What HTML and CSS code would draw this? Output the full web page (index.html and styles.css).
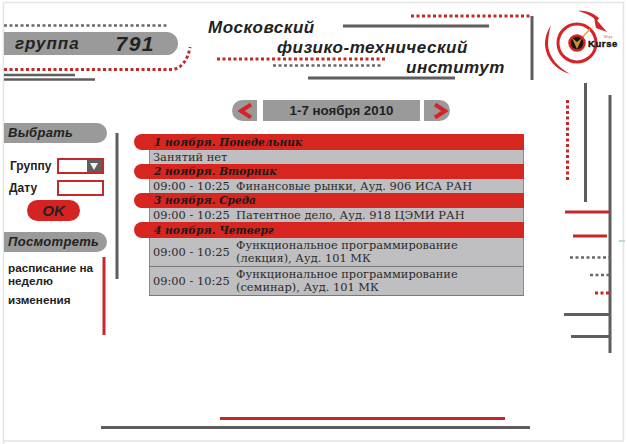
FILE: index.html
```html
<!DOCTYPE html>
<html lang="ru">
  <head>
    <meta charset="UTF-8" />
    <title>Расписание</title>
    <link rel="stylesheet" href="styles.css">
  </head>
  <body>
    <!-- decorative rules of the mockup, coordinates are the page's own -->
    <svg class="decor" width="627" height="444" viewBox="0 0 627 444">
      <path class="frame" d="M3.5 444V2.5H623.5V441H3.5" />

      <path class="dots-gray" d="M4 25.5H167" />
      <path class="dots-red" d="M4 69.5H172C181 69 188 60 190 47" />
      <path class="rule-gray thin" d="M4 75H75" />
      <path class="rule-gray thin" d="M4 79.5H95" />

      <path class="dots-red" d="M411 16H532" />
      <path class="rule-gray" d="M343 26H489" />
      <path class="rule-gray" d="M532 16V80" />
      <path class="dots-red" d="M217 59H385" />
      <path class="dots-gray" d="M273 65.5H383" />
      <path class="rule-gray" d="M308 78H455" />

      <path class="rule-gray" d="M117 133V279" />
      <path class="rule-red" d="M104 257V335" />

      <path class="rule-gray" d="M585.5 83V202" />
      <path class="rule-gray" d="M610 95V353" />
      <path class="dots-red" d="M567.5 100V181" />
      <path class="rule-red" d="M565 212H610" />
      <path class="rule-red" d="M573 236H607" />
      <path class="dots-gray" d="M570 257.5H610" />
      <path class="dots-gray" d="M590 275H610" />
      <path class="dots-red" d="M595 293H610" />
      <path class="rule-gray" d="M564 314.5H610" />
      <path class="rule-gray" d="M571 336.5H610" />
      <path class="rule-blue" d="M619 241H625" />

      <path class="rule-red" d="M220 418.5H505" />
      <path class="rule-gray" d="M101 427.5H530" />
    </svg>

    <div class="page">
      <header class="top">
        <div class="group-bar"><span>группа</span><b>791</b></div>
        <h1 class="title">
          <span class="title-a">Московский</span>
          <span class="title-b">физико-технический</span>
          <span class="title-c">институт</span>
        </h1>
        <svg class="logo" width="84" height="76" viewBox="0 0 84 76">
          <path class="logo-red" d="M8 16C3 24 2 30 2 36C3 50 13 61 27 65C16 59 6 49 5 36C5 29 6 22 8 16Z" />
          <path class="logo-red" d="M35 2C43 1 50 4 56 9L54 12C49 7 43 4 35 2Z" />
          <path class="logo-red" d="M51 8L64 23L53 19Z" />
          <circle class="logo-ring" cx="34" cy="34" r="19" />
          <path class="logo-ray" d="M38 30L47 20" />
          <circle class="logo-core" cx="34" cy="34" r="7.5" />
          <path class="logo-v" d="M29 29L34 40L39 29L34 33Z" />
          <text class="logo-small" x="61" y="29">Wiga</text>
          <text class="logo-name" x="45" y="38">Kurse</text>
        </svg>
      </header>

      <nav class="week">
        <a class="week-btn prev">
          <svg width="14" height="16" viewBox="0 0 14 16"><path d="M13 1.5L3 8L13 14.5" /></svg>
        </a>
        <div class="week-label">1-7 ноября 2010</div>
        <a class="week-btn next">
          <svg width="14" height="16" viewBox="0 0 14 16"><path d="M1 1.5L11 8L1 14.5" /></svg>
        </a>
      </nav>

      <div class="content">
        <aside class="side">
          <h2 class="side-title">Выбрать</h2>
          <form class="pick">
            <div class="pick-row">
              <label class="pick-group">Группу</label>
              <div class="field">
                <span class="field-arrow"></span>
              </div>
            </div>
            <div class="pick-row">
              <label class="pick-date">Дату</label>
              <div class="field"></div>
            </div>
            <button class="ok" type="button">OK</button>
          </form>

          <h2 class="side-title">Посмотреть</h2>
          <ul class="side-links">
            <li>расписание на неделю</li>
            <li>изменения</li>
          </ul>
        </aside>

        <main class="days">
          <h3 class="day first">1 ноября. Понедельник</h3>
          <div class="lesson"><span>Занятий нет</span></div>

          <h3 class="day">2 ноября. Вторник</h3>
          <div class="lesson"><span class="time">09:00 - 10:25</span><span>Финансовые рынки, Ауд. 906 ИСА РАН</span></div>

          <h3 class="day">3 ноября. Среда</h3>
          <div class="lesson"><span class="time">09:00 - 10:25</span><span>Патентное дело, Ауд. 918 ЦЭМИ РАН</span></div>

          <h3 class="day last">4 ноября. Четверг</h3>
          <div class="lesson tall"><span class="time">09:00 - 10:25</span><span>Функциональное программирование<br>(лекция), Ауд. 101 МК</span></div>
          <div class="lesson tall"><span class="time">09:00 - 10:25</span><span>Функциональное программирование<br>(семинар), Ауд. 101 МК</span></div>
        </main>
      </div>
    </div>
  </body>
</html>
```
FILE: styles.css
```css
body {
  margin: 0;
  background-color: #fff;
  font-family: "Liberation Sans", Arial, sans-serif;
  color: #222;
}

.decor {
  position: absolute;
  top: 0;
  left: 0;
  fill: none;
}

.frame {
  stroke: #e4e4e4;
  stroke-width: 1.5;
}

.rule-gray {
  stroke: #5f5d5e;
  stroke-width: 3;
}

.rule-gray.thin {
  stroke-width: 2.5;
}

.rule-red {
  stroke: #c4282a;
  stroke-width: 3;
}

.rule-blue {
  stroke: #b5d8e2;
  stroke-width: 2;
}

.dots-gray,
.dots-red {
  stroke-width: 3;
  stroke-dasharray: 3 2.5;
}

.dots-gray {
  stroke: #66696a;
  stroke-width: 2.5;
}

.dots-red {
  stroke: #c4282a;
}

.page {
  position: relative;
  width: 623px;
  height: 441px;
  padding: 3px 0 0 4px;
  box-sizing: border-box;
  overflow: hidden;
}

/* header */

.top {
  display: flex;
  align-items: flex-start;
  height: 97px;
}

.group-bar {
  display: flex;
  justify-content: space-between;
  align-items: center;
  flex: none;
  width: 174px;
  height: 23px;
  margin-top: 29px;
  padding: 0 23px 0 11px;
  box-sizing: border-box;
  background-color: #9a9a9a;
  border-radius: 0 12px 12px 0;
  font-style: italic;
  font-weight: bold;
  font-size: 17px;
  letter-spacing: 1px;
}

.group-bar b {
  font-size: 21px;
  letter-spacing: 1.5px;
}

.title {
  display: flex;
  flex-direction: column;
  flex: none;
  width: 335px;
  margin: 15px 0 0 30px;
  font-size: 17px;
  font-style: italic;
  line-height: 20px;
  letter-spacing: 0.5px;
}

.title-b {
  margin-left: 69px;
}

.title-c {
  margin-left: 198px;
}

.logo {
  flex: none;
  margin: 6px 0 0 0;
  fill: none;
  overflow: visible;
}

.logo-red {
  fill: #d52327;
}

.logo-ring {
  stroke: #d52327;
  stroke-width: 3;
}

.logo-ray {
  stroke: #e9a33b;
  stroke-width: 1.5;
}

.logo-core {
  fill: #1c1512;
  stroke: #d52327;
  stroke-width: 2.5;
}

.logo-v {
  fill: #c9922f;
}

.logo-name {
  fill: #111;
  stroke: #111;
  stroke-width: 0.4;
  font-size: 9.5px;
  font-weight: bold;
  letter-spacing: 0.6px;
}

.logo-small {
  fill: #d52327;
  font-size: 3px;
  letter-spacing: 0.5px;
}

/* week switch */

.week {
  display: flex;
  height: 21px;
  margin-left: 228px;
}

.week-btn {
  display: flex;
  justify-content: center;
  align-items: center;
  width: 25px;
  background-color: #9a9a9a;
}

.week-btn svg {
  fill: none;
  stroke: #d52327;
  stroke-width: 4;
}

.prev {
  border-radius: 11px 0 0 11px;
}

.next {
  width: 26px;
  margin-left: 4px;
  border-radius: 0 11px 11px 0;
}

.next svg {
  margin-left: 7px;
}

.week-label {
  width: 157px;
  margin-left: 6px;
  background-color: #9a9a9a;
  font-size: 13.3px;
  font-weight: bold;
  line-height: 21px;
  text-align: center;
}

/* left column and timetable */

.content {
  display: flex;
  margin-top: 2px;
}

.side {
  flex: none;
  width: 103px;
}

.side-title {
  height: 20px;
  margin: 0;
  padding-left: 4px;
  background-color: #9a9a9a;
  border-radius: 0 10px 10px 0;
  font-size: 13px;
  font-style: italic;
  line-height: 20px;
  letter-spacing: 0.3px;
}

.pick {
  display: flex;
  flex-direction: column;
  width: 100px;
  height: 89px;
  padding-top: 15px;
  box-sizing: border-box;
}

.pick-row {
  display: flex;
  align-items: center;
  justify-content: space-between;
  height: 16px;
  margin-bottom: 6px;
  font-size: 12px;
  font-weight: bold;
}

.pick-group {
  margin-left: 6px;
}

.pick-date {
  margin-left: 5px;
}

.field {
  display: flex;
  justify-content: flex-end;
  width: 47px;
  height: 16px;
  box-sizing: border-box;
  border: 2px solid #c4282a;
  background-color: #fff;
}

.field-arrow {
  width: 15px;
  background-color: #5f5d5e;
  position: relative;
}

.field-arrow::after {
  content: "";
  position: absolute;
  top: 3px;
  left: 3px;
  border-top: 7px solid #f2f2f2;
  border-left: 4.5px solid transparent;
  border-right: 4.5px solid transparent;
}

.ok {
  width: 53px;
  height: 21px;
  margin: -2px 0 0 23px;
  padding: 0;
  border: none;
  border-radius: 11px;
  background-color: #d52321;
  color: #222;
  font-family: inherit;
  font-size: 15px;
  font-style: italic;
  font-weight: bold;
}

.side-links {
  width: 92px;
  margin: 9px 0 0 4px;
  padding: 0;
  list-style: none;
  font-size: 11.7px;
  font-weight: bold;
  line-height: 13px;
}

.side-links li {
  margin-bottom: 6px;
}

.days {
  flex: none;
  width: 390px;
  margin: 11px 0 0 27px;
  font-family: "DejaVu Serif", serif;
  font-size: 11.4px;
}

.day {
  height: 15px;
  margin: 0;
  padding-left: 20px;
  background-color: #d7251f;
  border-radius: 8px 0 0 8px;
  font-size: 10.6px;
  font-style: italic;
  line-height: 15px;
  color: #1a1a1a;
}

.day.first,
.day.last {
  height: 16px;
  line-height: 16px;
}

.lesson {
  display: flex;
  align-items: center;
  height: 14px;
  margin-left: 15px;
  padding-left: 3px;
  background-color: #bfbfc1;
  border-left: 1px solid #8c8c8c;
  border-right: 1px solid #8c8c8c;
  box-sizing: border-box;
  line-height: 14px;
  color: #2b2b2b;
}

.time {
  width: 83px;
  flex: none;
}

.tall {
  height: 29px;
  line-height: 13px;
  border-bottom: 1px solid #77787a;
}
```
